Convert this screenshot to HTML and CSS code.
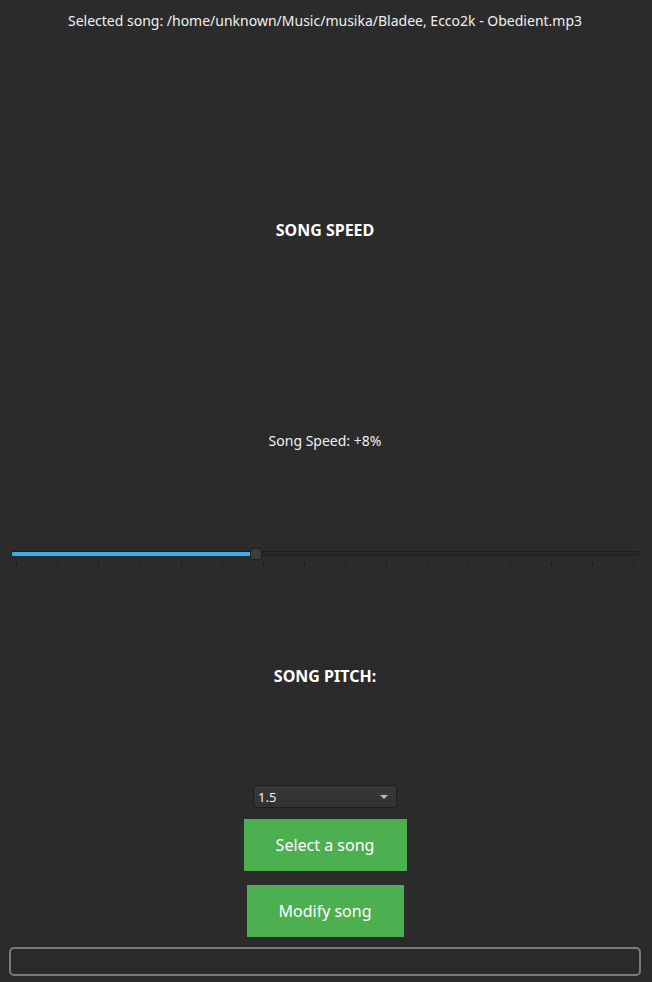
FILE: index.html
```html
<!DOCTYPE html>
<html>
<head>
<meta charset="utf-8">
<link rel="stylesheet" href="styles.css">
</head>
<body>
<div class="app">
  <div class="row header">Selected song: /home/unknown/Music/musika/Bladee, Ecco2k - Obedient.mp3</div>
  <div class="row heading speed-heading">SONG SPEED</div>
  <div class="row label">Song Speed: +8%</div>
  <div class="slider">
    <div class="groove">
      <div class="fill"></div>
      <div class="handle"></div>
    </div>
    <div class="ticks">
      <i></i><i></i><i></i><i></i><i></i><i></i><i></i><i></i>
      <i></i><i></i><i></i><i></i><i></i><i></i><i></i><i></i>
    </div>
  </div>
  <div class="row heading pitch-heading">SONG PITCH:</div>
  <div class="combo"><span>1.5</span><span class="arrow"></span></div>
  <div class="btn btn-select">Select a song</div>
  <div class="btn btn-modify">Modify song</div>
  <div class="progress"></div>
</div>
</body>
</html>
```
FILE: styles.css
```css
html, body {
  margin: 0;
  padding: 0;
  background: #2b2b2b;
}
.app {
  width: 652px;
  height: 982px;
  box-sizing: border-box;
  padding-right: 2px;
  display: flex;
  flex-direction: column;
  align-items: center;
  font-family: "Noto Sans", "DejaVu Sans", sans-serif;
  color: #eff0f1;
  font-size: 14px;
}
.row {
  width: 100%;
  display: flex;
  align-items: center;
  justify-content: center;
}
.header {
  height: 40px;
}
.heading {
  font-weight: bold;
  font-size: 16px;
  color: #ffffff;
}
.speed-heading {
  height: 380px;
}
.label {
  height: 40px;
}
.slider {
  margin-top: 80px;
  width: 628px;
  height: 30px;
  display: flex;
  flex-direction: column;
}
.groove {
  position: relative;
  margin-top: 11px;
  height: 5px;
  border-radius: 2px;
  background: #262626;
  border: 1px solid #1d1d1d;
  box-sizing: border-box;
}
.fill {
  position: absolute;
  left: 0;
  top: 0;
  width: 239px;
  height: 4px;
  background: #3daee9;
  border-radius: 1px;
}
.handle {
  position: absolute;
  left: 238px;
  top: -4px;
  width: 12px;
  height: 12px;
  box-sizing: border-box;
  border-radius: 3px;
  background: #3c3c3c;
  border: 1px solid #1f1f1f;
}
.ticks {
  margin: 7px 5px 0 5px;
  display: flex;
  justify-content: space-between;
}
.ticks i {
  display: block;
  width: 1px;
  height: 4px;
  background: #181818;
}
.pitch-heading {
  height: 212px;
}
.combo {
  margin-top: 3px;
  width: 144px;
  height: 23px;
  box-sizing: border-box;
  border: 1px solid #1c1c1c;
  border-radius: 3px;
  background: linear-gradient(#383838, #323232);
  display: flex;
  align-items: center;
  justify-content: space-between;
  padding: 0 8px 0 4px;
  font-size: 13px;
  color: #eff0f1;
}
.arrow {
  width: 0;
  height: 0;
  border-left: 4px solid transparent;
  border-right: 4px solid transparent;
  border-top: 4px solid #bdbdbd;
}
.btn {
  background: #4caf50;
  color: #ffffff;
  font-size: 16px;
  height: 52px;
  display: flex;
  align-items: center;
  justify-content: center;
}
.btn-select {
  margin-top: 11px;
  width: 163px;
}
.btn-modify {
  margin-top: 14px;
  width: 157px;
}
.progress {
  margin-top: 10px;
  width: 632px;
  height: 29px;
  box-sizing: border-box;
  border: 2px solid #7a7a7a;
  border-radius: 5px;
}
```
